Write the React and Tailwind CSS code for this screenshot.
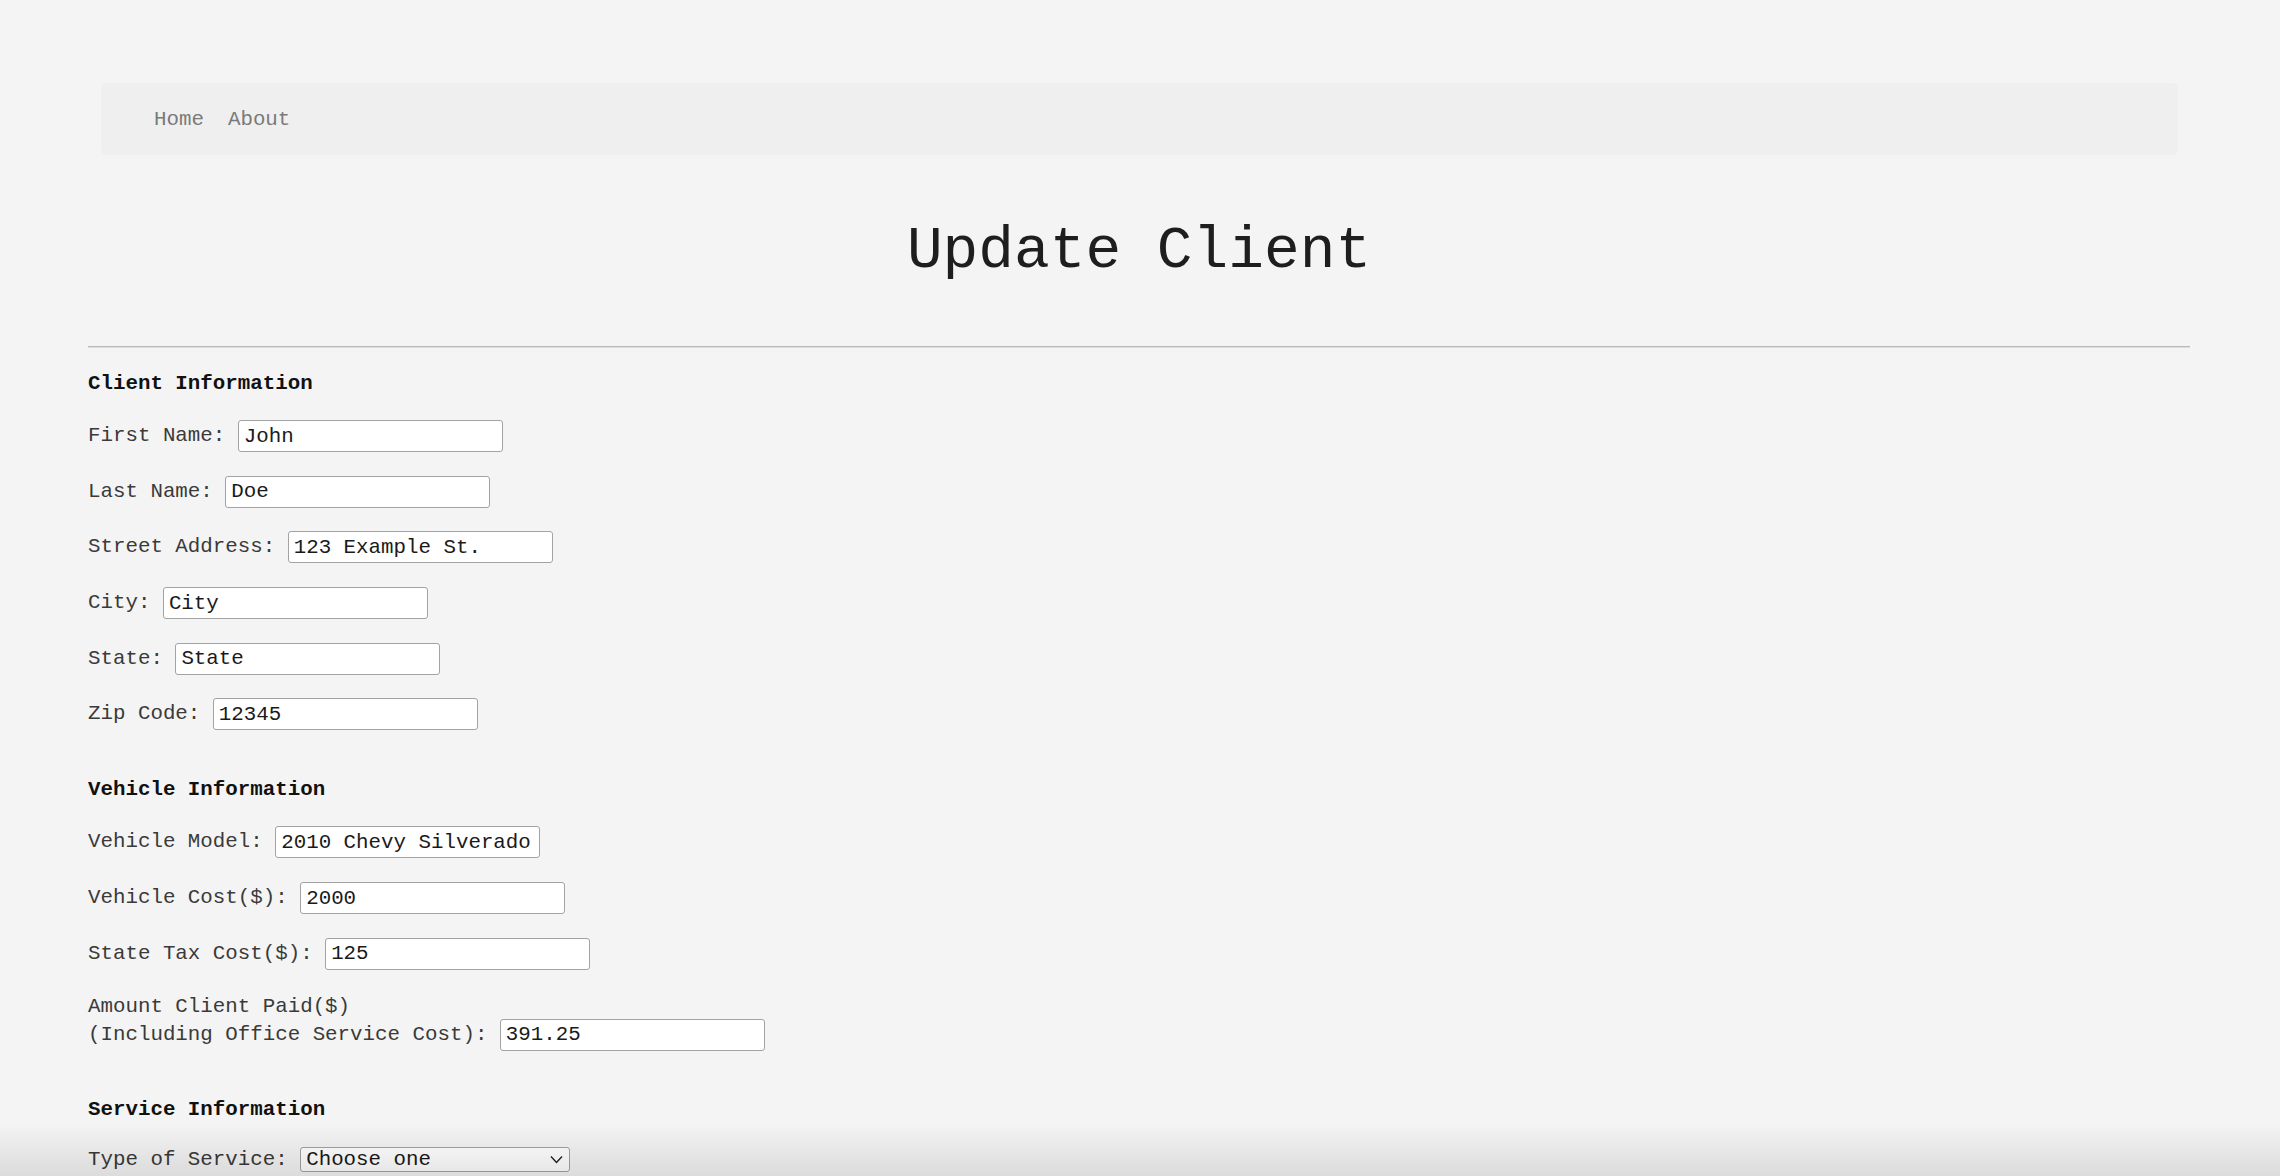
import React from "react";

const mono = { fontFamily: '"Courier New", "Liberation Mono", monospace' };

function Field({ label, value, className = "" }) {
  return (
    <div className={"flex items-center h-[32px] whitespace-pre " + className}>
      <span>{label + " "}</span>
      <input
        type="text"
        defaultValue={value}
        className="w-[265px] h-[32px] bg-white border border-[#a3a3a3] rounded-[3px] px-[5px] py-[3px] text-[20.8px] text-[#1a1a1a] outline-none"
        style={mono}
      />
    </div>
  );
}

export default function App() {
  return (
    <div
      className="min-h-[1176px] bg-[#f4f4f4] text-[#3a3a3a] text-[20.8px] leading-[24px] pl-[88px] pr-[90px] pt-[83px] pb-[200px]"
      style={mono}
    >
      <nav className="ml-[13px] mr-[12px] h-[72px] bg-[#efefef] rounded-[5px] flex items-center pl-[53px] pt-[2px] gap-[24px] text-[#7a7a7a]">
        <a className="cursor-pointer">Home</a>
        <a className="cursor-pointer">About</a>
      </nav>

      <h1 className="mt-[62px] text-center text-[59.5px] leading-[68px] font-normal text-[#1e1e1e]">
        Update Client
      </h1>

      <div className="mt-[61px] border-t border-t-[#b9b9b9] border-b border-b-[#dedede]" />

      <h2 className="mt-[24px] font-bold text-[#111111]">Client Information</h2>
      <div className="mt-[24px] flex flex-col gap-[23.7px]">
        <Field label="First Name:" value="John" />
        <Field label="Last Name:" value="Doe" />
        <Field label="Street Address:" value="123 Example St." />
        <Field label="City:" value="City" />
        <Field label="State:" value="State" />
        <Field label="Zip Code:" value="12345" />
      </div>

      <h2 className="mt-[48px] font-bold text-[#111111]">Vehicle Information</h2>
      <div className="mt-[24px] flex flex-col gap-[23.7px]">
        <Field label="Vehicle Model:" value="2010 Chevy Silverado" />
        <Field label="Vehicle Cost($):" value="2000" />
        <Field label="State Tax Cost($):" value="125" />
        <div>
          <div className="leading-[25px]">Amount Client Paid($)</div>
          <Field label="(Including Office Service Cost):" value="391.25" />
        </div>
      </div>

      <h2 className="mt-[47px] font-bold text-[#111111]">Service Information</h2>
      <div className="mt-[22px] flex items-center h-[32px] whitespace-pre">
        <span>{"Type of Service: "}</span>
        <div className="relative">
          <select
            className="appearance-none w-[270px] h-[25px] bg-white border border-[#a3a3a3] rounded-[3px] pl-[5px] text-[20.8px] leading-[23px] text-[#1a1a1a] outline-none"
            style={mono}
            defaultValue=""
          >
            <option value="">Choose one</option>
            <option value="title">Title Transfer</option>
            <option value="registration">Registration</option>
          </select>
          <svg
            className="absolute right-[7px] top-[8px] pointer-events-none"
            width="13"
            height="9"
            viewBox="0 0 13 9"
            fill="none"
          >
            <path d="M1 1.5 L6.5 7.5 L12 1.5" stroke="#222" strokeWidth="1.4" />
          </svg>
        </div>
      </div>

      <div className="fixed left-0 right-0 bottom-0 h-[52px] pointer-events-none bg-gradient-to-b from-transparent to-black/10" />
    </div>
  );
}
